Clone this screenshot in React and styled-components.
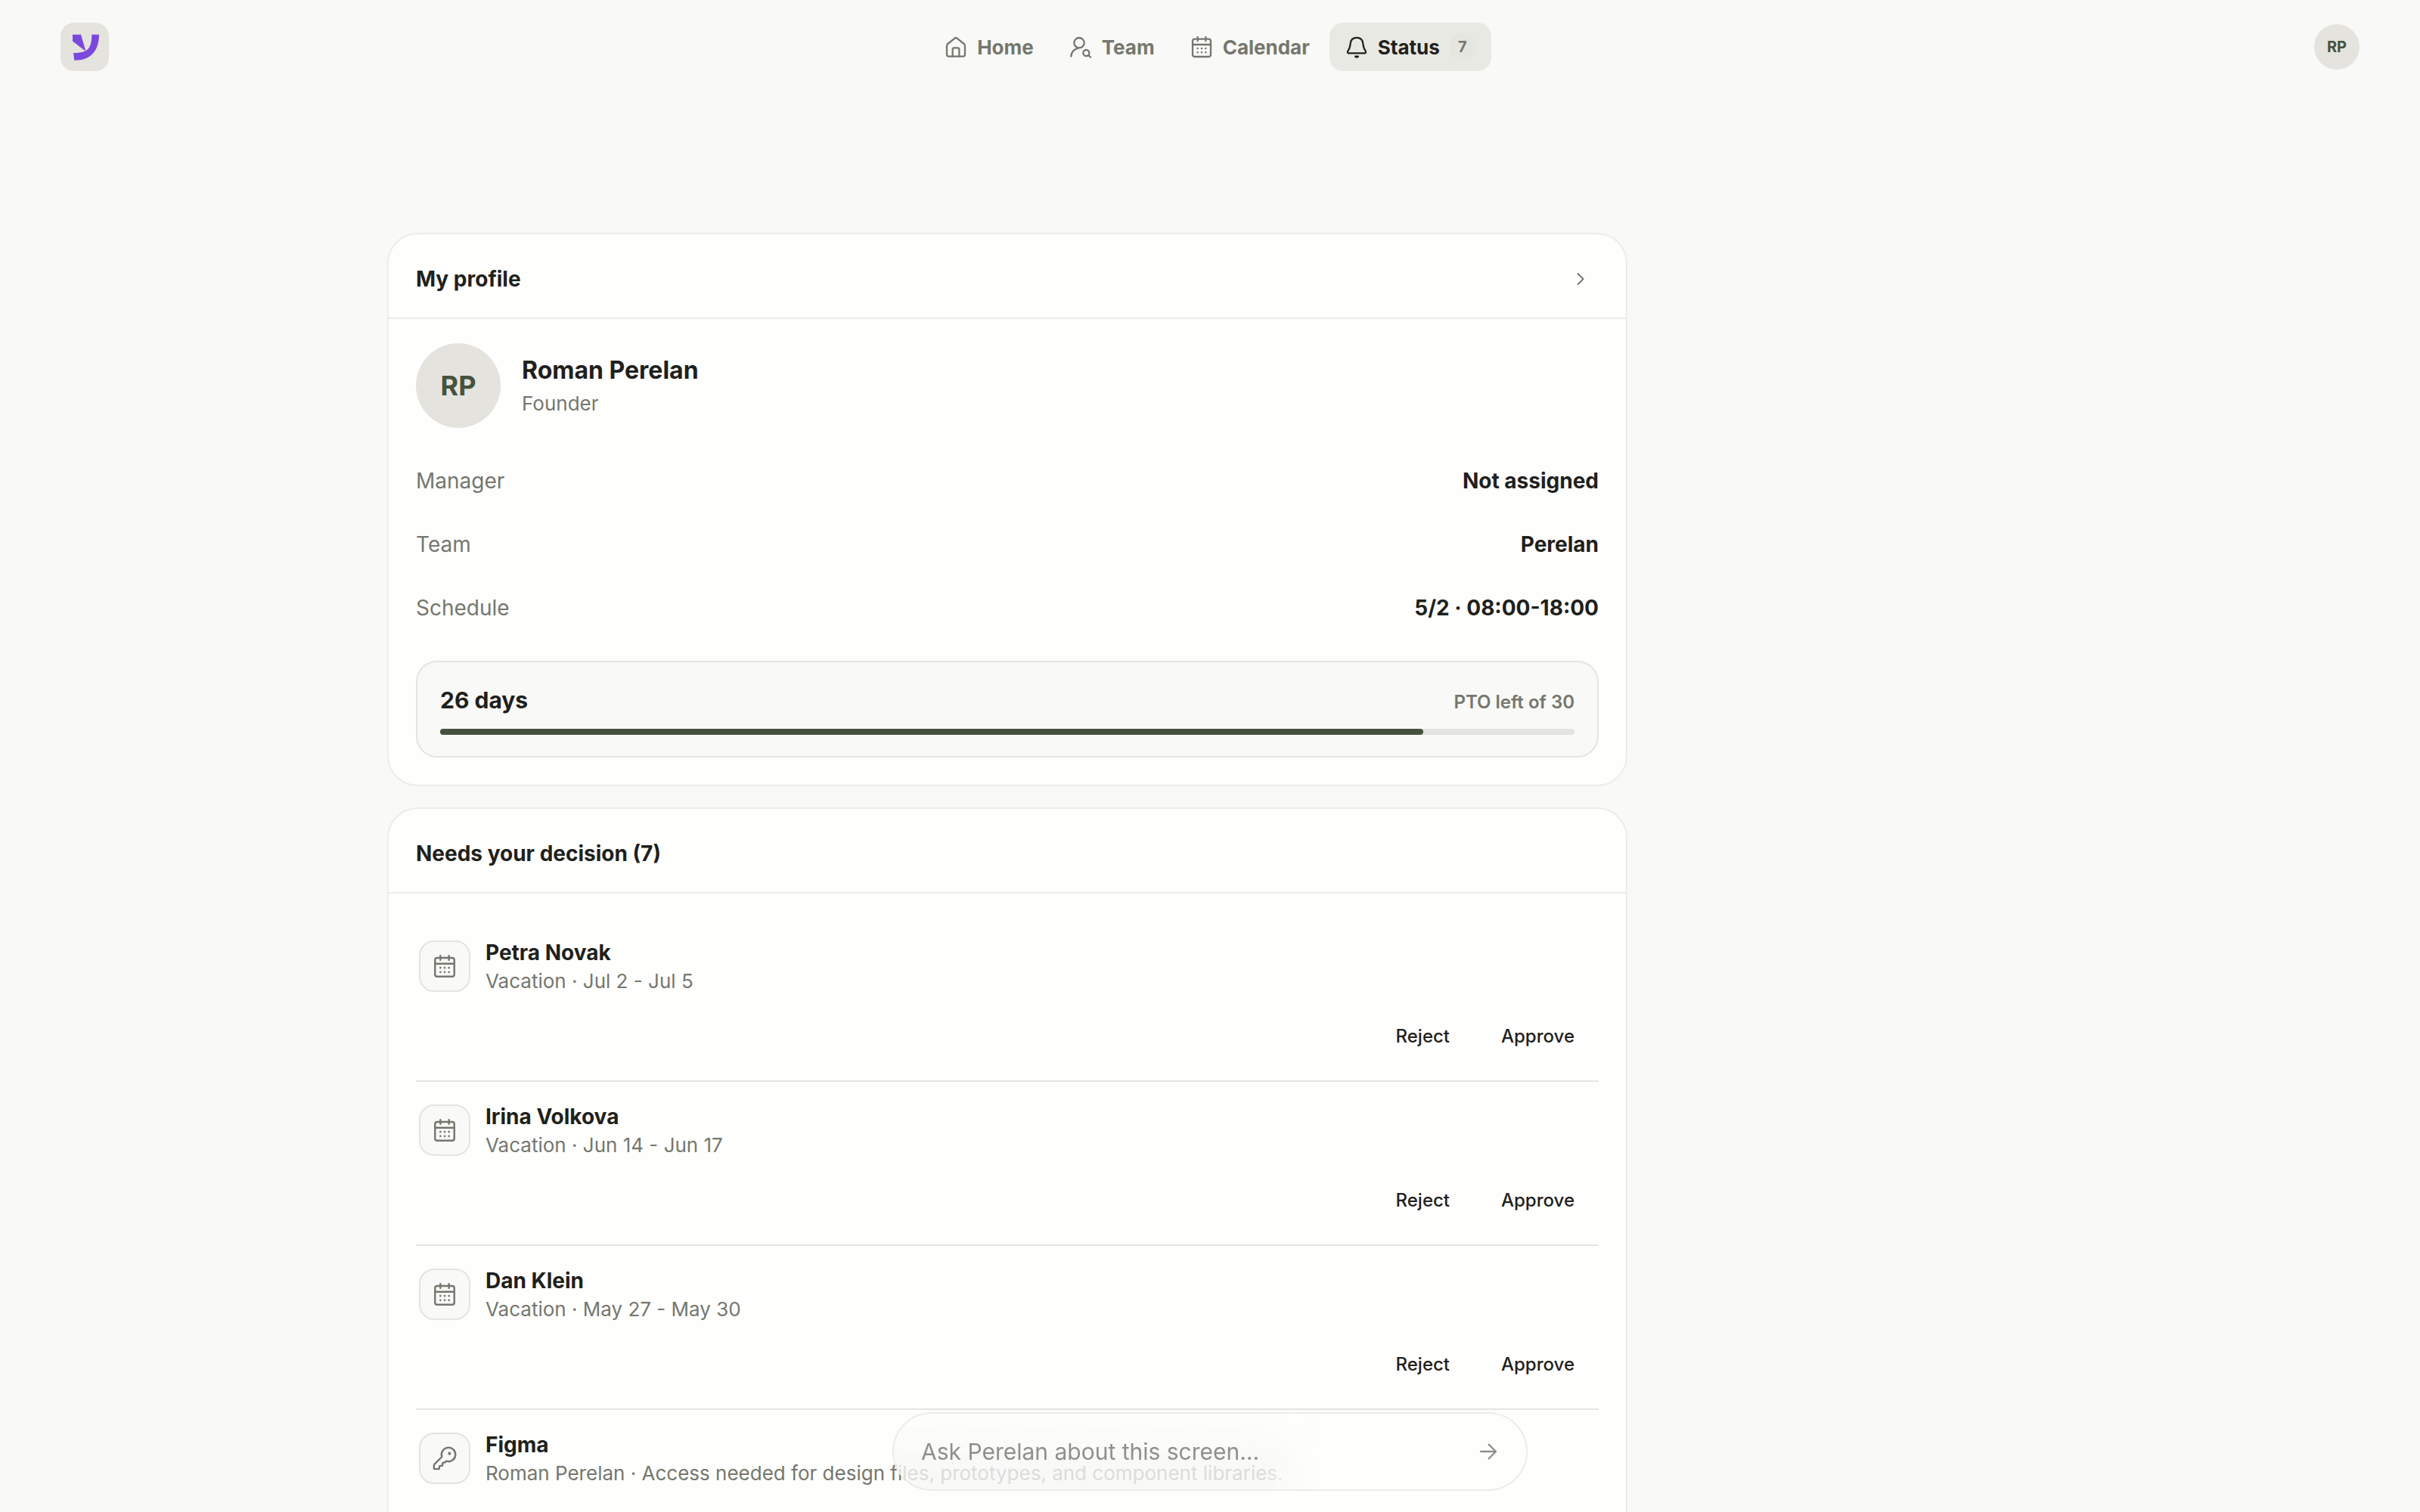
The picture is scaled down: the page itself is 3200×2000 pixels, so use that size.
import styled, { createGlobalStyle, ThemeProvider } from "styled-components";

const theme = {
  page: "#f9f9f7",
  card: "#fefefd",
  text: "#1f211b",
  muted: "#75776d",
  faint: "#8f9189",
  green: "#46523d",
  stone: "#e4e3de",
  line: "#ecece9",
  lineDark: "#e4e4e0",
  pill: "#e9e9e4",
  purple: "#7c48dc",
};

const GlobalStyle = createGlobalStyle`
  * {
    box-sizing: border-box;
  }
  body {
    margin: 0;
    font-family: Inter, "Liberation Sans", sans-serif;
    color: ${(props) => props.theme.text};
    background-color: ${(props) => props.theme.page};
  }
  h1, h2, h3, p, ul, dl, dd {
    margin: 0;
    padding: 0;
  }
  button, input {
    font-family: inherit;
    color: inherit;
    background: none;
    border: none;
    padding: 0;
  }
  button {
    cursor: pointer;
  }
`;

const Shell = styled.div`
  display: flex;
  flex-direction: column;
  height: 100vh;
`;
const Header = styled.header`
  display: grid;
  grid-template-columns: 1fr auto 1fr;
  align-items: center;
  padding: 30px 80px;
`;
const Logo = styled.a`
  display: flex;
  width: 64px;
  height: 64px;
  border-radius: 18px;
  background-color: ${(props) => props.theme.stone};
`;
const Nav = styled.nav`
  display: flex;
  gap: 6px;
`;
const NavLink = styled.a`
  display: flex;
  align-items: center;
  gap: 12px;
  height: 64px;
  padding: 0 20px;
  border-radius: 18px;
  font-size: 26px;
  font-weight: 700;
  text-decoration: none;
  color: ${(props) => (props.$active ? props.theme.text : props.theme.muted)};
  background-color: ${(props) =>
    props.$active ? props.theme.pill : "transparent"};
`;
const Count = styled.span`
  width: 36px;
  border-radius: 50%;
  font-size: 20px;
  line-height: 36px;
  text-align: center;
  color: ${(props) => props.theme.muted};
  background-color: #e6e6e1;
`;
const Avatar = styled.span`
  display: flex;
  align-items: center;
  justify-content: center;
  flex: none;
  width: ${(props) => props.$size}px;
  height: ${(props) => props.$size}px;
  border-radius: 50%;
  font-size: ${(props) => props.$font}px;
  font-weight: 700;
  color: ${(props) => props.theme.green};
  background-color: ${(props) => props.theme.stone};
`;
const AccountButton = styled.button`
  justify-self: end;
  border-radius: 50%;
`;
const Main = styled.main`
  flex: 1;
  min-height: 0;
  overflow-y: auto;
  scrollbar-width: none;
  padding: 184px 80px 0;
`;
const Columns = styled.div`
  display: grid;
  grid-template-columns: minmax(0, 1640px);
  gap: 28px;
  max-width: 2176px;
  margin: 0 auto;
  padding-bottom: 160px;
`;
const Card = styled.section`
  border: 2px solid ${(props) => props.theme.line};
  border-radius: 40px;
  background-color: ${(props) => props.theme.card};
`;
const CardHeader = styled.div`
  display: flex;
  align-items: center;
  justify-content: space-between;
  height: 112px;
  padding: 8px 36px 0;
  border-bottom: 2px solid ${(props) => props.theme.line};
`;
const CardTitle = styled.h2`
  font-size: 28px;
  line-height: 36px;
  font-weight: 700;
`;
const OpenButton = styled.button`
  display: flex;
  align-items: center;
  justify-content: center;
  width: 48px;
  height: 48px;
  color: ${(props) => props.theme.muted};
`;
const CardBody = styled.div`
  padding: 32px 36px 36px;
`;
const Person = styled.div`
  display: flex;
  align-items: center;
  gap: 28px;
  margin-bottom: 28px;
`;
const PersonText = styled.div`
  padding-top: 4px;
`;
const PersonName = styled.h1`
  font-size: 32px;
  line-height: 44px;
  font-weight: 700;
`;
const PersonRole = styled.p`
  font-size: 26px;
  line-height: 44px;
  color: ${(props) => props.theme.muted};
`;
const FactRow = styled.div`
  display: flex;
  align-items: center;
  justify-content: space-between;
  height: 84px;
  font-size: 28px;
`;
const FactLabel = styled.dt`
  color: ${(props) => props.theme.muted};
`;
const FactValue = styled.dd`
  font-weight: 700;
`;
const Quota = styled.div`
  margin-top: 28px;
  padding: 32px 30px 28px;
  border: 2px solid ${(props) => props.theme.lineDark};
  border-radius: 28px;
  background-color: ${(props) => props.theme.page};
`;
const QuotaText = styled.div`
  display: flex;
  align-items: baseline;
  justify-content: space-between;
  height: 36px;
  margin-bottom: 20px;
  line-height: 36px;
`;
const QuotaDays = styled.span`
  font-size: 30px;
  font-weight: 700;
`;
const QuotaNote = styled.span`
  font-size: 24px;
  font-weight: 600;
  color: ${(props) => props.theme.muted};
`;
const Track = styled.div`
  height: 8px;
  border-radius: 4px;
  background-color: ${(props) => props.theme.lineDark};
`;
const Fill = styled.div`
  height: 100%;
  border-radius: 4px;
  background-color: ${(props) => props.theme.green};
`;
const Requests = styled.ul`
  list-style: none;
`;
const Request = styled.li`
  min-height: 215px;
  padding: 30px 4px 29px;

  & + & {
    border-top: 2px solid ${(props) => props.theme.lineDark};
  }
`;
const RequestInfo = styled.div`
  display: flex;
  align-items: center;
  gap: 20px;
  height: 68px;
`;
const Tile = styled.span`
  display: flex;
  align-items: center;
  justify-content: center;
  flex: none;
  width: 68px;
  height: 68px;
  border: 2px solid ${(props) => props.theme.lineDark};
  border-radius: 20px;
  color: ${(props) => props.theme.muted};
  background-color: ${(props) => props.theme.page};
`;
const RequestTitle = styled.h3`
  font-size: 28px;
  line-height: 40px;
  font-weight: 700;
`;
const RequestNote = styled.p`
  font-size: 26px;
  line-height: 36px;
  color: ${(props) => props.theme.muted};
`;
const Actions = styled.div`
  display: flex;
  justify-content: flex-end;
  gap: 12px;
  margin-top: 28px;
`;
const ActionButton = styled.button`
  height: 60px;
  padding: 0 28px;
  border-radius: 18px;
  font-size: 24px;
  font-weight: 500;
`;
const Dock = styled.form`
  position: fixed;
  bottom: 28px;
  left: 0;
  right: 0;
  display: flex;
  align-items: center;
  width: 840px;
  max-width: 100%;
  height: 104px;
  margin: 0 auto;
  padding: 0 34px 0 36px;
  border: 2px solid ${(props) => props.theme.line};
  border-radius: 52px;
  background: linear-gradient(to right, transparent 58%, #fefefd 67%),
    linear-gradient(to bottom, transparent, rgba(117, 119, 109, 0.04) 70%),
    rgba(254, 254, 253, 0.78);
`;
const DockInput = styled.input`
  flex: 1;
  min-width: 0;
  height: 100%;
  font-size: 30px;
  outline: none;

  &::placeholder {
    color: ${(props) => props.theme.faint};
    opacity: 1;
  }
`;
const SendButton = styled.button`
  display: flex;
  color: ${(props) => props.theme.faint};
`;
const IconSvg = styled.svg`
  flex: none;
  fill: none;
  stroke: currentColor;
  stroke-width: 1.7;
  stroke-linecap: round;
  stroke-linejoin: round;
`;

const icons = {
  home: (
    <>
      <path d="M3 11.2V19.5a2 2 0 0 0 2 2h14a2 2 0 0 0 2-2v-8.3c0-.9-.3-1.6-.9-2.2l-6.8-5.4c-.8-.7-1.8-.7-2.6 0L3.9 9c-.6.6-.9 1.3-.9 2.2Z" />
      <path d="M8.75 21.5v-7.2c0-.7.5-1.3 1.3-1.3h3.9c.8 0 1.3.6 1.3 1.3v7.2" />
    </>
  ),
  team: (
    <>
      <circle cx="10.5" cy="8" r="5" />
      <path d="M2.5 21.5c0-3.9 2.7-7.3 7-8.3" />
      <circle cx="17.5" cy="18" r="3" />
      <path d="M19.7 20.2 21.8 22.3" />
    </>
  ),
  calendar: (
    <>
      <rect x="3" y="4.25" width="18" height="17.5" rx="2" />
      <path d="M8 2.25v4M16 2.25v4M3 9.75h18" />
      <path
        strokeWidth="1.9"
        d="M8 13.5h.01M12 13.5h.01M16 13.5h.01M8 17.5h.01M12 17.5h.01M16 17.5h.01"
      />
    </>
  ),
  bell: (
    <>
      <path d="M3.2 16.2A1.3 1.3 0 0 0 4.2 18.3h15.6a1.3 1.3 0 0 0 1-2.1C19.5 14.6 18.6 12.5 18.3 9 18 5.2 15.6 2.9 12 2.9S6 5.2 5.7 9c-.3 3.5-1.2 5.6-2.5 7.2Z" />
      <path d="M10.6 21.5a2 2 0 0 0 2.8 0Z" />
    </>
  ),
  key: (
    <>
      <path d="M2.586 17.414A2 2 0 0 0 2 18.828V21a1 1 0 0 0 1 1h3a1 1 0 0 0 1-1v-1a1 1 0 0 1 1-1h1a1 1 0 0 0 1-1v-1a1 1 0 0 1 1-1h.172a2 2 0 0 0 1.414-.586l.814-.814a6.5 6.5 0 1 0-4-4z" />
      <circle cx="16.5" cy="7.5" r=".6" fill="currentColor" />
    </>
  ),
  chevron: <path d="m9 6 6 6-6 6" />,
  arrow: <path d="M4.5 12h15M12.5 5l7 7-7 7" />,
};

function Icon({ name, size }) {
  return (
    <IconSvg viewBox="0 0 24 24" width={size} height={size} aria-hidden="true">
      {icons[name]}
    </IconSvg>
  );
}

const links = [
  { icon: "home", label: "Home" },
  { icon: "team", label: "Team" },
  { icon: "calendar", label: "Calendar" },
  { icon: "bell", label: "Status", count: 7 },
];

const facts = [
  { label: "Manager", value: "Not assigned" },
  { label: "Team", value: "Perelan" },
  { label: "Schedule", value: "5/2 · 08:00-18:00" },
];

const requests = [
  {
    icon: "calendar",
    title: "Petra Novak",
    note: "Vacation · Jul 2 - Jul 5",
    actions: ["Reject", "Approve"],
  },
  {
    icon: "calendar",
    title: "Irina Volkova",
    note: "Vacation · Jun 14 - Jun 17",
    actions: ["Reject", "Approve"],
  },
  {
    icon: "calendar",
    title: "Dan Klein",
    note: "Vacation · May 27 - May 30",
    actions: ["Reject", "Approve"],
  },
  {
    icon: "key",
    title: "Figma",
    note: "Roman Perelan · Access needed for design files, prototypes, and component libraries.",
  },
];

const pto = { left: 26, total: 30 };

export default function App() {
  return (
    <ThemeProvider theme={theme}>
      <GlobalStyle />
      <Shell>
        <Header>
          <Logo href="#" aria-label="Perelan">
            <svg viewBox="0 0 64 64" width="64" height="64" fill={theme.purple}>
              <path d="M16 15.7h11L33.5 38 16 24.5z" />
              <path d="M41.3 15.7H51c0 21.3-11 34-31.5 34h-1.2L17 40c6-.2 11-.6 16.3-2.6 5.7-3.4 8-10 8-21.7z" />
            </svg>
          </Logo>
          <Nav>
            {links.map((link) => (
              <NavLink key={link.label} href="#" $active={Boolean(link.count)}>
                <Icon name={link.icon} size={32} />
                {link.label}
                {link.count && <Count>{link.count}</Count>}
              </NavLink>
            ))}
          </Nav>
          <AccountButton aria-label="Account">
            <Avatar $size={60} $font={20}>
              RP
            </Avatar>
          </AccountButton>
        </Header>
        <Main>
          <Columns>
            <Card>
              <CardHeader>
                <CardTitle>My profile</CardTitle>
                <OpenButton aria-label="Open profile">
                  <Icon name="chevron" size={28} />
                </OpenButton>
              </CardHeader>
              <CardBody>
                <Person>
                  <Avatar $size={112} $font={36}>
                    RP
                  </Avatar>
                  <PersonText>
                    <PersonName>Roman Perelan</PersonName>
                    <PersonRole>Founder</PersonRole>
                  </PersonText>
                </Person>
                <dl>
                  {facts.map((fact) => (
                    <FactRow key={fact.label}>
                      <FactLabel>{fact.label}</FactLabel>
                      <FactValue>{fact.value}</FactValue>
                    </FactRow>
                  ))}
                </dl>
                <Quota>
                  <QuotaText>
                    <QuotaDays>{pto.left} days</QuotaDays>
                    <QuotaNote>PTO left of {pto.total}</QuotaNote>
                  </QuotaText>
                  <Track>
                    <Fill style={{ width: `${(pto.left / pto.total) * 100}%` }} />
                  </Track>
                </Quota>
              </CardBody>
            </Card>
            <Card>
              <CardHeader>
                <CardTitle>Needs your decision (7)</CardTitle>
              </CardHeader>
              <CardBody>
                <Requests>
                  {requests.map((request) => (
                    <Request key={request.title}>
                      <RequestInfo>
                        <Tile>
                          <Icon name={request.icon} size={34} />
                        </Tile>
                        <div>
                          <RequestTitle>{request.title}</RequestTitle>
                          <RequestNote>{request.note}</RequestNote>
                        </div>
                      </RequestInfo>
                      {request.actions && (
                        <Actions>
                          {request.actions.map((action) => (
                            <ActionButton key={action}>{action}</ActionButton>
                          ))}
                        </Actions>
                      )}
                    </Request>
                  ))}
                </Requests>
              </CardBody>
            </Card>
          </Columns>
        </Main>
        <Dock>
          <DockInput
            aria-label="Ask Perelan"
            placeholder="Ask Perelan about this screen…"
          />
          <SendButton type="button" aria-label="Send">
            <Icon name="arrow" size={32} />
          </SendButton>
        </Dock>
      </Shell>
    </ThemeProvider>
  );
}
